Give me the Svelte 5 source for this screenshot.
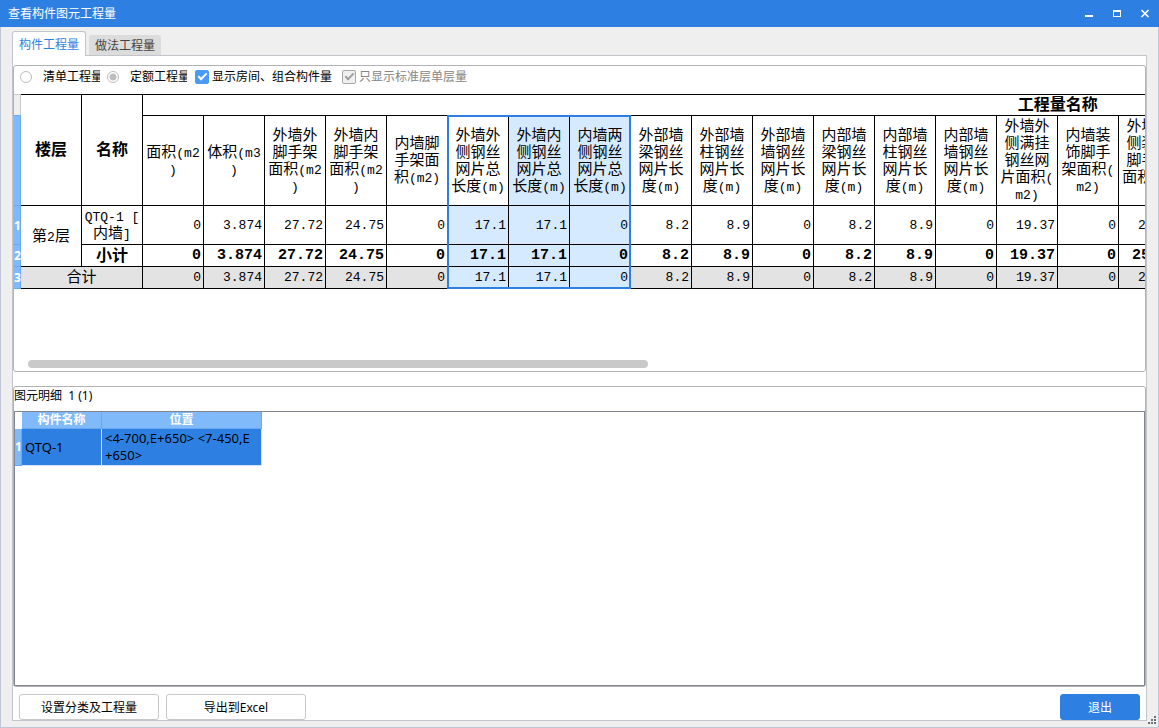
<script lang="ts">
    const columns = [
        { title: ["面积(m2", ")"], value: "0" },
        { title: ["体积(m3", ")"], value: "3.874" },
        { title: ["外墙外", "脚手架", "面积(m2", ")"], value: "27.72" },
        { title: ["外墙内", "脚手架", "面积(m2", ")"], value: "24.75" },
        { title: ["内墙脚", "手架面", "积(m2)"], value: "0" },
        { title: ["外墙外", "侧钢丝", "网片总", "长度(m)"], value: "17.1" },
        { title: ["外墙内", "侧钢丝", "网片总", "长度(m)"], value: "17.1" },
        { title: ["内墙两", "侧钢丝", "网片总", "长度(m)"], value: "0" },
        { title: ["外部墙", "梁钢丝", "网片长", "度(m)"], value: "8.2" },
        { title: ["外部墙", "柱钢丝", "网片长", "度(m)"], value: "8.9" },
        { title: ["外部墙", "墙钢丝", "网片长", "度(m)"], value: "0" },
        { title: ["内部墙", "梁钢丝", "网片长", "度(m)"], value: "8.2" },
        { title: ["内部墙", "柱钢丝", "网片长", "度(m)"], value: "8.9" },
        { title: ["内部墙", "墙钢丝", "网片长", "度(m)"], value: "0" },
        { title: ["外墙外", "侧满挂", "钢丝网", "片面积(", "m2)"], value: "19.37" },
        { title: ["内墙装", "饰脚手", "架面积(", "m2)"], value: "0" },
        { title: ["外墙外", "侧装饰", "脚手架", "面积(m2", ")"], value: "25.32" }
    ];

    const totalColumns = 30;
    const colWidth = 61;
    const headWidth = 7;

    let selFirst = 5;
    let selLast = 7;
    let mode = "quota";
    let showRooms = true;
    let standardOnly = true;

    $: selLeft = headWidth + (selFirst + 2) * colWidth - 1;
    $: selWidth = (selLast - selFirst + 1) * colWidth + 1;

    function isSelected(i: number) {
        return i >= selFirst && i <= selLast;
    }

    // latin runs use the mono face, chinese runs the default one
    function runs(text: string) {
        return text.match(/[\x00-\x7f]+|[^\x00-\x7f]+/g) ?? [];
    }
</script>

{#snippet mixed(line)}
    <span class="line">{#each runs(line) as run}<span class:latin={run.charCodeAt(0) < 128}>{run}</span>{/each}</span>
{/snippet}

<div class="window">
    <header class="titlebar">
        <span class="caption">查看构件图元工程量</span>
        <button aria-label="最小化"><svg width="10" height="11" viewBox="0 0 10 11"><path d="M1 7h8v2H1z" fill="#fff" /></svg></button>
        <button aria-label="最大化"><svg width="10" height="11" viewBox="0 0 10 11"><path d="M1 2h8v7H1zM2 4v4h6V4z" fill="#fff" fill-rule="evenodd" /></svg></button>
        <button aria-label="关闭"><svg width="10" height="11" viewBox="0 0 10 11"><path d="M1.5 2l7 7M8.5 2l-7 7" stroke="#fff" stroke-width="1.7" /></svg></button>
    </header>

    <div class="client">
        <div class="tabs" role="tablist">
            <button class="tab active" role="tab" aria-selected="true">构件工程量</button>
            <button class="tab" role="tab" aria-selected="false">做法工程量</button>
        </div>

        <main class="pane">
            <section class="group">
                <div class="options">
                    <label class="radio"><input type="radio" value="list" bind:group={mode} /><span>清单工程量</span></label>
                    <label class="radio"><input type="radio" value="quota" bind:group={mode} /><span>定额工程量</span></label>
                    <label class="check"><input type="checkbox" bind:checked={showRooms} /><span>显示房间、组合构件量</span></label>
                    <label class="check off"><input type="checkbox" bind:checked={standardOnly} disabled /><span>只显示标准层单层量</span></label>
                </div>

                <div class="sheet">
                    <table class="grid">
                        <colgroup>
                            <col class="head" />
                            {#each Array(totalColumns + 2) as _}<col class="data" />{/each}
                        </colgroup>
                        <tbody>
                            <tr class="r-title">
                                <th class="corner"></th>
                                <th class="big" rowspan="2">楼层</th>
                                <th class="big" rowspan="2">名称</th>
                                <th class="big" colspan={totalColumns}>工程量名称</th>
                            </tr>
                            <tr class="r-names">
                                <th class="rownum"></th>
                                {#each columns as col, i}
                                    <th class="text" class:selected={isSelected(i) && i != selFirst}>
                                        {#each col.title as line}{@render mixed(line)}{/each}
                                    </th>
                                {/each}
                            </tr>
                            <tr class="r-item">
                                <th class="rownum">1</th>
                                <td class="text" rowspan="2">{@render mixed("第2层")}</td>
                                <td class="text">{@render mixed("QTQ-1 [")}{@render mixed("内墙]")}</td>
                                {#each columns as col, i}<td class="num" class:selected={isSelected(i)}>{col.value}</td>{/each}
                            </tr>
                            <tr class="r-sum">
                                <th class="rownum">2</th>
                                <th class="big">小计</th>
                                {#each columns as col, i}<td class="num bold" class:selected={isSelected(i)}>{col.value}</td>{/each}
                            </tr>
                            <tr class="r-sum total">
                                <th class="rownum">3</th>
                                <td class="text" colspan="2">{@render mixed("合计")}</td>
                                {#each columns as col, i}<td class="num" class:selected={isSelected(i)}>{col.value}</td>{/each}
                            </tr>
                        </tbody>
                    </table>
                    <div class="selection" style="left: {selLeft}px; width: {selWidth}px"></div>
                </div>
                <div class="scrollbar"><div class="thumb"></div></div>
            </section>

            <section class="group details">
                <div class="details-title">图元明细&nbsp; 1 (1)</div>
                <div class="details-box">
                    <table class="list">
                        <tbody>
                            <tr>
                                <td class="blank"></td>
                                <th class="c-name">构件名称</th>
                                <th class="c-pos">位置</th>
                            </tr>
                            <tr class="picked">
                                <th class="rownum">1</th>
                                <td>QTQ-1</td>
                                <td>&lt;4-700,E+650&gt; &lt;7-450,E<br />+650&gt;</td>
                            </tr>
                        </tbody>
                    </table>
                </div>
            </section>

            <footer>
                <button class="btn">设置分类及工程量</button>
                <button class="btn">导出到Excel</button>
                <button class="btn primary">退出</button>
            </footer>
        </main>
        <svg class="grip" width="9" height="9" viewBox="0 0 9 9"><path d="M7 0h2v2H7zM4 3h2v2H4zM7 3h2v2H7zM1 6h2v2H1zM4 6h2v2H4zM7 6h2v2H7z" fill="#6d7178" /></svg>
    </div>
</div>

<style>
    :global(body) {
        margin: 0;
        overflow: hidden;
    }

    .window {
        display: flex;
        flex-direction: column;
        min-height: 100vh;
        font-family: "Noto Sans", "Noto Sans CJK SC", sans-serif;
        font-size: 12px;
        line-height: 18px;
        color: #000;
    }

    button {
        font: inherit;
        padding: 0;
        border: none;
    }

    table {
        border-collapse: separate;
        border-spacing: 0;
        table-layout: fixed;
    }

    th,
    td {
        padding: 0;
        box-sizing: border-box;
    }

    .titlebar {
        display: flex;
        align-items: center;
        height: 27px;
        padding-left: 8px;
        background: #2d80e2;
        color: #fff;
    }

    .caption {
        flex: 1;
    }

    .titlebar button {
        display: flex;
        align-items: center;
        justify-content: center;
        width: 28px;
        height: 27px;
        background: none;
    }

    .client {
        position: relative;
        flex: 1;
        display: flex;
        flex-direction: column;
        padding: 4px 11px 6px;
        border: 1px solid #bec6d8;
        border-top: none;
        background: #efefef;
    }

    .tabs {
        display: flex;
        align-items: flex-end;
        gap: 3px;
        height: 24px;
    }

    .tab {
        box-sizing: border-box;
        width: 72px;
        height: 20px;
        padding-top: 2px;
        border-radius: 3px 3px 0 0;
        background: #dcdcdc;
        color: #444;
    }

    .tab.active {
        width: 74px;
        height: 25px;
        margin-bottom: -1px;
        border: 1px solid #c3c5ca;
        border-bottom: none;
        background: #fff;
        color: #2d80e2;
        z-index: 1;
    }

    .pane {
        flex: 1;
        display: flex;
        flex-direction: column;
        padding-top: 9px;
        border: 1px solid #c3c5ca;
        background: #fff;
        min-width: 0;
    }

    .group {
        border: 1px solid #b2b2b2;
        border-radius: 3px;
    }

    .options {
        display: flex;
        align-items: center;
        height: 22px;
        padding: 0 6px 6px;
    }

    .options label {
        display: flex;
        align-items: center;
        white-space: nowrap;
    }

    .options input {
        appearance: none;
        flex: none;
        box-sizing: border-box;
        margin: 0;
    }

    .radio {
        gap: 11px;
        margin-right: 7px;
    }

    .radio span {
        width: 57px;
        overflow: hidden;
    }

    .radio input {
        width: 12px;
        height: 12px;
        border: 1px solid #bbb;
        border-radius: 50%;
        background: #fff;
    }

    .radio input:checked {
        background: radial-gradient(circle, #bdbdbd 3px, #fff 4px);
    }

    .check {
        gap: 3px;
        margin-left: 1px;
        margin-right: 9px;
    }

    .check input {
        width: 14px;
        height: 14px;
        border: 1px solid #4a9bf5;
        border-radius: 2px;
        background: #4a9bf5;
        display: flex;
        align-items: center;
        justify-content: center;
    }

    .check input:checked::before {
        content: "";
        width: 7px;
        height: 3px;
        margin-bottom: 3px;
        border-left: 2px solid #fff;
        border-bottom: 2px solid #fff;
        transform: rotate(-45deg);
    }

    .check.off {
        color: #868686;
    }

    .check.off input {
        border-color: #a8a8a8;
        background: #f0f0f0;
    }

    .check.off input:checked::before {
        border-color: #a0a0a0;
    }

    .sheet {
        position: relative;
        height: 266px;
        overflow: hidden;
    }

    .grid {
        width: 1959px;
        font-family: "Noto Sans CJK SC", sans-serif;
        font-size: 15px;
        line-height: 17px;
    }

    .grid .head {
        width: 7px;
    }

    .grid .data {
        width: 61px;
    }

    .grid th,
    .grid td {
        border-right: 1px solid #000;
        border-bottom: 1px solid #000;
        text-align: center;
        font-weight: 400;
    }

    .r-title {
        height: 22px;
    }

    .r-title th {
        border-top: 1px solid #000;
    }

    .r-names {
        height: 90px;
    }

    .r-item {
        height: 39px;
    }

    .r-sum {
        height: 22px;
    }

    .total td {
        background: #e3e3e3;
    }

    .grid .text {
        padding-bottom: 4px;
    }

    .grid .big {
        padding-bottom: 3px;
        font-size: 16px;
        font-weight: 700;
    }

    .line {
        display: block;
        white-space: pre;
        height: 17px;
    }

    .latin {
        font-family: "Liberation Mono", monospace;
        font-size: 13px;
    }

    .grid .num {
        padding-right: 2px;
        text-align: right;
        font-family: "Liberation Mono", monospace;
        font-size: 13px;
    }

    .grid .bold {
        font-size: 15px;
        font-weight: 700;
    }

    .grid .selected {
        background: #d6eaff;
    }

    .grid .corner {
        border-color: #c8c8c8;
        border-bottom-color: #69a8ee;
        background: #efefef;
    }

    .grid .rownum,
    .list .rownum {
        border: 1px solid #69a8ee;
        border-top: none;
        border-left: none;
        background: #80bafb;
        color: #fff;
        font-family: "Noto Sans", sans-serif;
        font-size: 12px;
        font-weight: 700;
    }

    .selection {
        position: absolute;
        top: 21px;
        height: 174px;
        box-sizing: border-box;
        border: 2px solid #2d80e2;
    }

    .scrollbar {
        padding: 0 14px 3px;
    }

    .thumb {
        width: 56.2%;
        height: 8px;
        border-radius: 4px;
        background: #c9c9c9;
    }

    .details {
        flex: 1;
        display: flex;
        flex-direction: column;
        margin-top: 14px;
    }

    .details-title {
        padding-bottom: 6px;
    }

    .details-box {
        flex: 1;
        border: 1px solid #80848c;
    }

    .list {
        width: 247px;
    }

    .list th {
        height: 17px;
        border: 1px solid #69a8ee;
        border-top: none;
        border-left: none;
        background: #80bafb;
        color: #fff;
        line-height: 16px;
    }

    .list .blank {
        width: 7px;
    }

    .list .c-name {
        width: 80px;
    }

    .picked {
        height: 37px;
    }

    .picked td {
        padding-left: 3px;
        border-right: 1px solid #d5e6fa;
        border-bottom: 1px solid #d5e6fa;
        background: #2d80e2;
        font-size: 13px;
        line-height: 17px;
        white-space: nowrap;
    }

    footer {
        display: flex;
        gap: 7px;
        padding: 7px 6px 0;
    }

    .btn {
        box-sizing: border-box;
        width: 140px;
        height: 26px;
        padding-top: 2px;
        border: 1px solid #c8c8c8;
        border-radius: 3px;
        background: #fff;
    }

    .btn.primary {
        width: 80px;
        margin-left: auto;
        border-color: #2d80e2;
        background: #2d80e2;
        color: #fff;
    }

    .grip {
        position: absolute;
        right: 2px;
        bottom: 2px;
    }
</style>
